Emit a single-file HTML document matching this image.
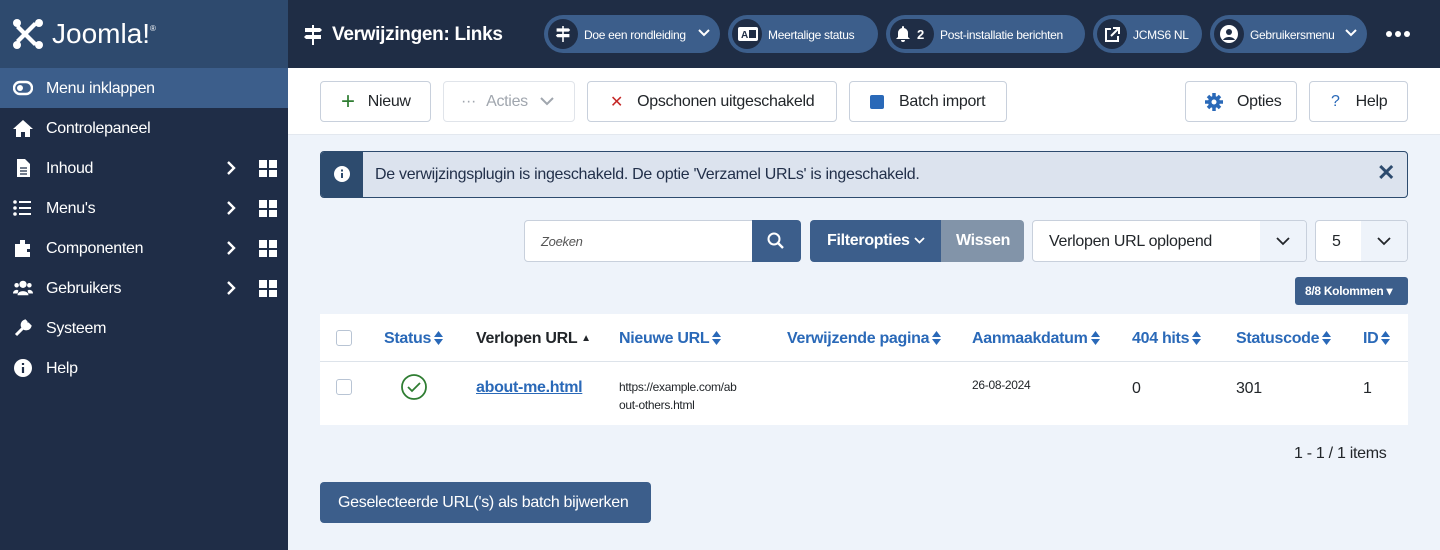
<!DOCTYPE html>
<html><head><meta charset="utf-8"><style>
*{box-sizing:border-box;margin:0;padding:0}
body{width:1440px;height:550px;overflow:hidden;font-family:"Liberation Sans",sans-serif;background:#eef3fa;position:relative;color:#22262a;letter-spacing:-0.3px}
.abs{position:absolute}
#side{left:0;top:0;width:288px;height:550px;background:#1f2d47}
#logo{left:0;top:0;width:288px;height:68px;background:#2e4a6e;color:#fff;font-size:28px;display:flex;align-items:center;padding-left:12px}
.nav{position:absolute;left:0;width:288px;height:40px;color:#fff;font-size:16px;display:flex;align-items:center;padding-left:46px;padding-top:2px}
.nav .ic{position:absolute;left:13px;top:11px;width:20px;height:18px}
.nav .ar{position:absolute;left:226px;top:12px;width:10px;height:16px}
.nav .gr{position:absolute;left:259px;top:12px;width:17px;height:17px;display:grid;grid-template-columns:8px 8px;gap:2px}
.nav .gr i{background:#fff;display:block}
#top{left:288px;top:0;width:1152px;height:68px;background:#1f2d45}
.pill{position:absolute;top:15px;height:38px;border-radius:19px;background:#3c5e8b;color:#fff;font-size:12px;display:flex;align-items:center;padding-left:40px;padding-top:2px}
.pill .c{position:absolute;left:4px;top:4px;width:30px;height:30px;border-radius:15px;background:#1f2d45}
.btn{position:absolute;top:81px;height:41px;background:#fff;border:1px solid #c8d0dc;border-radius:4px;font-size:16px;display:flex;align-items:center}
.h{position:absolute;top:330px;font-size:16px;font-weight:bold;color:#2a69b8}
.sort{display:inline-block;width:9px;height:14px;vertical-align:-2px;margin-left:3px}
</style></head><body>
<div id="side" class="abs"></div>
<div id="logo" class="abs">
<svg width="32" height="32" viewBox="0 0 32 32"><g fill="#fff"><circle cx="5" cy="5" r="4"/><circle cx="27" cy="5" r="4"/><circle cx="5" cy="27" r="4"/><circle cx="27" cy="27" r="4"/><path d="M7 7l18 18-3 3L4 10zM25 7L7 25l-3-3L22 4z"/></g></svg>
<span style="margin-left:8px;font-weight:300;letter-spacing:0">Joomla!</span><span style="font-size:8px;align-self:flex-start;margin-top:24px">®</span></div>
<div class="nav" style="top:68px;background:#3c5e8b"><svg class="ic" viewBox="0 0 20 18"><rect x="1" y="3" width="18" height="12" rx="6" fill="none" stroke="#fff" stroke-width="2.4"/><circle cx="7" cy="9" r="3" fill="#fff"/></svg>Menu inklappen</div>
<div class="nav" style="top:108px"><svg class="ic" viewBox="0 0 20 18"><path d="M10 1L0 10h3v8h5v-5h4v5h5v-8h3z" fill="#fff"/></svg>Controlepaneel</div>
<div class="nav" style="top:148px"><svg class="ic" viewBox="0 0 20 18"><path d="M4 0h8l5 5v13H4z" fill="#fff"/><path d="M7 9h7M7 12h7M7 15h7" stroke="#1f2d47" stroke-width="1.3"/></svg>Inhoud<svg class="ar" viewBox="0 0 10 16"><path d="M2 2l6 6-6 6" stroke="#fff" stroke-width="2.4" fill="none"/></svg><div class="gr"><i></i><i></i><i></i><i></i></div></div>
<div class="nav" style="top:188px"><svg class="ic" viewBox="0 0 20 18"><g fill="#fff"><circle cx="2" cy="3" r="1.8"/><circle cx="2" cy="9" r="1.8"/><circle cx="2" cy="15" r="1.8"/><rect x="6" y="2" width="12" height="2"/><rect x="6" y="8" width="12" height="2"/><rect x="6" y="14" width="12" height="2"/></g></svg>Menu's<svg class="ar" viewBox="0 0 10 16"><path d="M2 2l6 6-6 6" stroke="#fff" stroke-width="2.4" fill="none"/></svg><div class="gr"><i></i><i></i><i></i><i></i></div></div>
<div class="nav" style="top:228px"><svg class="ic" viewBox="0 0 20 18"><path d="M2 5h5V1h5v4h5v5h-3v3h3v5H2z" fill="#fff"/></svg>Componenten<svg class="ar" viewBox="0 0 10 16"><path d="M2 2l6 6-6 6" stroke="#fff" stroke-width="2.4" fill="none"/></svg><div class="gr"><i></i><i></i><i></i><i></i></div></div>
<div class="nav" style="top:268px"><svg class="ic" viewBox="0 0 22 18"><g fill="#fff"><circle cx="11" cy="5" r="4"/><circle cx="4" cy="6" r="2.5"/><circle cx="18" cy="6" r="2.5"/><path d="M5 17c0-6 12-6 12 0zM0 15c0-4 5-5 6-3l-1 3zM22 15c0-4-5-5-6-3l1 3z"/></g></svg>Gebruikers<svg class="ar" viewBox="0 0 10 16"><path d="M2 2l6 6-6 6" stroke="#fff" stroke-width="2.4" fill="none"/></svg><div class="gr"><i></i><i></i><i></i><i></i></div></div>
<div class="nav" style="top:308px"><svg class="ic" viewBox="0 0 20 18"><path d="M3 16l8-8M12 2a4 4 0 105 5l-2-2-2 0 0-2z" stroke="#fff" stroke-width="3" fill="#fff"/></svg>Systeem</div>
<div class="nav" style="top:348px"><svg class="ic" viewBox="0 0 20 18"><circle cx="10" cy="9" r="9" fill="#fff"/><path d="M10 8v6M10 4v2" stroke="#1f2d47" stroke-width="2.2"/></svg>Help</div>

<div id="top" class="abs"></div>
<svg class="abs" style="left:304px;top:25px" width="18" height="20" viewBox="0 0 18 20"><path d="M8 0h2v20H8z M1 3h15l2 2-2 2H1z M2 10h15v4H2l-2-2z" fill="#fff"/></svg>
<div class="abs" style="left:332px;top:24px;color:#fff;font-size:19px;font-weight:bold">Verwijzingen: Links</div>
<div class="pill" style="left:544px;width:176px">Doe een rondleiding<div class="c"></div><svg class="abs" style="left:11px;top:11px" width="16" height="16" viewBox="0 0 18 20"><path d="M8 0h2v20H8z M1 3h15l2 2-2 2H1z M2 10h15v4H2l-2-2z" fill="#fff"/></svg><svg class="abs" style="left:154px;top:14px" width="12" height="9"><path d="M1 1l5 5 5-5" stroke="#fff" stroke-width="2" fill="none"/></svg></div>
<div class="pill" style="left:728px;width:150px">Meertalige status<div class="c"></div><svg class="abs" style="left:10px;top:12px" width="20" height="14"><rect width="20" height="14" rx="2" fill="#fff"/><text x="3" y="11" font-size="10" font-weight="bold" fill="#1f2d45" font-family="Liberation Sans">A</text><rect x="11" y="3" width="7" height="8" fill="#1f2d45"/></svg></div>
<div class="pill" style="left:886px;width:199px;padding-left:54px">Post-installatie berichten<div class="c" style="width:44px"></div><svg class="abs" style="left:10px;top:11px" width="14" height="16" viewBox="0 0 14 16"><path d="M7 0a1 1 0 011 1v1a5 5 0 014 5v4l2 2H0l2-2V7a5 5 0 014-5V1a1 1 0 011-1zM5 14h4a2 2 0 01-4 0z" fill="#fff"/></svg><span class="abs" style="left:31px;top:12px;font-weight:bold;font-size:13px">2</span></div>
<div class="pill" style="left:1093px;width:109px">JCMS6 NL<div class="c"></div><svg class="abs" style="left:11px;top:12px" width="16" height="16" viewBox="0 0 16 16"><path d="M7 2H2v12h12V9M9 1h6v6M15 1L7 9" stroke="#fff" stroke-width="2" fill="none"/></svg></div>
<div class="pill" style="left:1210px;width:157px">Gebruikersmenu<div class="c"></div><svg class="abs" style="left:10px;top:10px" width="18" height="18"><circle cx="9" cy="9" r="9" fill="#fff"/><circle cx="9" cy="7" r="3" fill="#1f2d45"/><path d="M3 15c2-4 10-4 12 0" fill="#1f2d45"/></svg><svg class="abs" style="left:135px;top:14px" width="12" height="9"><path d="M1 1l5 5 5-5" stroke="#fff" stroke-width="2" fill="none"/></svg></div>
<div class="abs" style="left:1386px;top:31px;display:flex;gap:3px"><i style="width:6px;height:6px;border-radius:3px;background:#fff"></i><i style="width:6px;height:6px;border-radius:3px;background:#fff"></i><i style="width:6px;height:6px;border-radius:3px;background:#fff"></i></div>

<div class="abs" style="left:288px;top:68px;width:1152px;height:67px;background:#fff;border-bottom:1px solid #e3e8ef"></div>
<div class="btn" style="left:320px;width:111px;padding-left:20px"><span style="color:#2f7d32;font-size:24px;font-weight:300;margin-right:13px">+</span>Nieuw</div>
<div class="btn" style="left:443px;width:132px;padding-left:17px;color:#a0a6ae;border-color:#e0e4ea">···<span style="margin-left:10px">Acties</span><svg style="margin-left:12px" width="14" height="9"><path d="M1 1l6 6 6-6" stroke="#a0a6ae" stroke-width="2" fill="none"/></svg></div>
<div class="btn" style="left:587px;width:250px;padding-left:22px"><span style="color:#c52827;font-size:16px;margin-right:14px">✕</span>Opschonen uitgeschakeld</div>
<div class="btn" style="left:849px;width:158px;padding-left:20px"><i style="width:14px;height:14px;background:#2a69b8;border-radius:2px;margin-right:15px"></i>Batch import</div>
<div class="btn" style="left:1185px;width:112px;padding-left:19px"><svg width="18" height="18" viewBox="0 0 18 18" style="margin-right:14px"><circle cx="9" cy="9" r="6" fill="#2a69b8"/><path d="M9 0v18M0 9h18M3 3l12 12M15 3L3 15" stroke="#2a69b8" stroke-width="3.5"/><circle cx="9" cy="9" r="2.5" fill="#fff"/></svg>Opties</div>
<div class="btn" style="left:1309px;width:99px;padding-left:21px"><span style="color:#2a69b8;margin-right:16px">?</span>Help</div>

<div class="abs" style="left:320px;top:151px;width:1088px;height:47px;background:#dce3ee;border:1px solid #2d4b6e;border-radius:4px"></div>
<div class="abs" style="left:321px;top:152px;width:42px;height:45px;background:#2d4b6e;border-radius:3px 0 0 3px"></div>
<svg class="abs" style="left:334px;top:166px" width="16" height="16"><circle cx="8" cy="8" r="8" fill="#fff"/><path d="M8 7v5M8 3.5v2" stroke="#2d4b6e" stroke-width="2"/></svg>
<div class="abs" style="left:375px;top:166px;font-size:16px;color:#22304a">De verwijzingsplugin is ingeschakeld. De optie 'Verzamel URLs' is ingeschakeld.</div>
<div class="abs" style="left:1377px;top:160px;font-size:22px;font-weight:bold;color:#2d4b6e">✕</div>

<div class="abs" style="left:524px;top:220px;width:230px;height:42px;background:#fff;border:1px solid #c8d0dc;border-radius:4px 0 0 4px;font-size:13px;font-style:italic;color:#555;padding:13px 16px">Zoeken</div>
<div class="abs" style="left:752px;top:220px;width:49px;height:42px;background:#3c5e8b;border-radius:0 4px 4px 0"><svg style="margin:12px 15px" width="18" height="18"><circle cx="7" cy="7" r="5.5" stroke="#fff" stroke-width="2" fill="none"/><path d="M11 11l5 5" stroke="#fff" stroke-width="2.4"/></svg></div>
<div class="abs" style="left:810px;top:220px;width:131px;height:42px;background:#3c5e8b;border-radius:4px 0 0 4px;color:#fff;font-size:16px;font-weight:bold;padding:12px 0 0 17px">Filteropties <svg width="11" height="8"><path d="M1 1l4.5 4.5L10 1" stroke="#fff" stroke-width="1.8" fill="none"/></svg></div>
<div class="abs" style="left:941px;top:220px;width:83px;height:42px;background:#8294a9;border-radius:0 4px 4px 0;color:#fff;font-size:16px;font-weight:bold;padding:12px 0 0 15px">Wissen</div>
<div class="abs" style="left:1032px;top:220px;width:275px;height:42px;background:#fff;border:1px solid #c8d0dc;border-radius:4px;font-size:16px;padding:12px 16px;overflow:hidden">Verlopen URL oplopend<div class="abs" style="right:0;top:0;width:46px;height:40px;background:#eef3fa"><svg style="margin:16px 16px" width="14" height="9"><path d="M1 1l6 6 6-6" stroke="#22262a" stroke-width="1.8" fill="none"/></svg></div></div>
<div class="abs" style="left:1315px;top:220px;width:93px;height:42px;background:#fff;border:1px solid #c8d0dc;border-radius:4px;font-size:16px;padding:12px 16px;overflow:hidden">5<div class="abs" style="right:0;top:0;width:46px;height:40px;background:#eef3fa"><svg style="margin:16px 16px" width="14" height="9"><path d="M1 1l6 6 6-6" stroke="#22262a" stroke-width="1.8" fill="none"/></svg></div></div>
<div class="abs" style="left:1295px;top:277px;width:113px;height:28px;background:#3c5e8b;border-radius:3px;color:#fff;font-size:12px;font-weight:bold;padding:7px 0 0 10px">8/8 Kolommen ▾</div>

<div class="abs" style="left:320px;top:314px;width:1088px;height:111px;background:#fff"></div>
<div class="abs" style="left:320px;top:361px;width:1088px;height:1px;background:#dde3ea"></div>
<div class="abs" style="left:336px;top:330px;width:16px;height:16px;border:1px solid #b8c4d4;border-radius:3px;background:#fff"></div>
<div class="abs" style="left:336px;top:379px;width:16px;height:16px;border:1px solid #b8c4d4;border-radius:3px;background:#fff"></div>
<svg style="display:none"><symbol id="s" viewBox="0 0 9 14"><path d="M4.5 0L9 6H0zM4.5 14L9 8H0z" fill="#2a69b8"/></symbol></svg>
<div class="h" style="left:384px">Status<svg class="sort"><use href="#s"/></svg></div>
<div class="h" style="left:476px;color:#22262a">Verlopen URL <span style="font-size:10px;vertical-align:2px">▲</span></div>
<div class="h" style="left:619px">Nieuwe URL<svg class="sort"><use href="#s"/></svg></div>
<div class="h" style="left:787px">Verwijzende pagina<svg class="sort"><use href="#s"/></svg></div>
<div class="h" style="left:972px">Aanmaakdatum<svg class="sort"><use href="#s"/></svg></div>
<div class="h" style="left:1132px">404 hits<svg class="sort"><use href="#s"/></svg></div>
<div class="h" style="left:1236px">Statuscode<svg class="sort"><use href="#s"/></svg></div>
<div class="h" style="left:1363px">ID<svg class="sort"><use href="#s"/></svg></div>
<svg class="abs" style="left:401px;top:374px" width="26" height="26"><circle cx="13" cy="13" r="12" stroke="#2f7d32" stroke-width="1.8" fill="none"/><path d="M7 13l4 4 8-8" stroke="#2f7d32" stroke-width="1.8" fill="none"/></svg>
<div class="abs" style="left:476px;top:379px;font-size:16px;font-weight:bold;color:#2a69b8;text-decoration:underline">about-me.html</div>
<div class="abs" style="left:619px;top:378px;font-size:12px;line-height:18px;width:118px;word-break:break-all">https://example.com/about-others.html</div>
<div class="abs" style="left:972px;top:378px;font-size:12px">26-08-2024</div>
<div class="abs" style="left:1132px;top:380px;font-size:16px">0</div>
<div class="abs" style="left:1236px;top:380px;font-size:16px">301</div>
<div class="abs" style="left:1363px;top:380px;font-size:16px">1</div>
<div class="abs" style="left:1294px;top:445px;font-size:16px">1 - 1 / 1 items</div>
<div class="abs" style="left:320px;top:482px;width:331px;height:41px;background:#3c5e8b;border-radius:4px;color:#fff;font-size:16px;padding:12px 0 0 18px">Geselecteerde URL('s) als batch bijwerken</div>
</body></html>
